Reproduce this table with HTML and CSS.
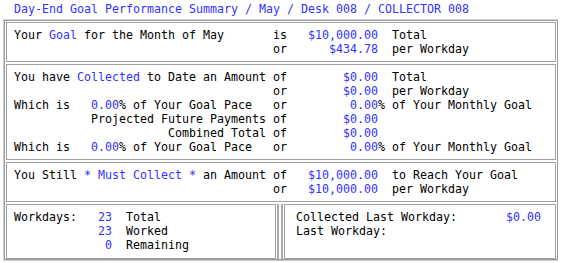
FILE: index.html
```html
<!DOCTYPE html>
<html>
<head>
<meta charset="utf-8">
<link rel="stylesheet" href="styles.css">
</head>
<body>
<div class="title">Day-End Goal Performance Summary / May / Desk 008 / COLLECTOR 008</div>
<div class="frame">
<div class="box">Your <span class="b">Goal</span> for the Month of May       is   <span class="b">$10,000.00</span>  Total
                                     or      <span class="b">$434.78</span>  per Workday</div>
<div class="box">You have <span class="b">Collected</span> to Date an Amount of        <span class="b">$0.00</span>  Total
                                     or        <span class="b">$0.00</span>  per Workday
Which is   <span class="b">0.00</span>% of Your Goal Pace   or         <span class="b">0.00</span>% of Your Monthly Goal
           Projected Future Payments of        <span class="b">$0.00</span>
                      Combined Total of        <span class="b">$0.00</span>
Which is   <span class="b">0.00</span>% of Your Goal Pace   or         <span class="b">0.00</span>% of Your Monthly Goal</div>
<div class="box">You Still <span class="b">* Must Collect *</span> an Amount of   <span class="b">$10,000.00</span>  to Reach Your Goal
                                     or   <span class="b">$10,000.00</span>  per Workday</div>
<div class="bottom">
<div class="box left">Workdays:   <span class="b">23</span>  Total
            <span class="b">23</span>  Worked
             <span class="b">0</span>  Remaining</div>
<div class="split"></div>
<div class="box right">Collected Last Workday:       <span class="b">$0.00</span>
Last Workday:</div>
</div>
</div>
</body>
</html>
```

FILE: styles.css
```css
html, body {
  background: #ffffff;
}
body {
  margin: 2px 3px;
  font-family: "DejaVu Sans Mono", "Liberation Mono", monospace;
  font-size: 11.63px;
  line-height: 14px;
  color: #000000;
}
.b {
  color: #3333ff;
}
.title {
  color: #3333ff;
  white-space: pre;
  padding-left: 11px;
  height: 15px;
  margin-bottom: 2px;
}
.frame {
  box-sizing: border-box;
  width: 556px;
  border: 1px solid #cfcfcf;
  box-shadow: inset 0 0 0 1px #9c9c9c;
  padding: 2px;
  display: flex;
  flex-direction: column;
  gap: 2px;
}
.box {
  border: 1px solid #a0a0a0;
  padding: 5px 7px;
  white-space: pre;
}
.bottom {
  display: flex;
  margin-bottom: -1px;
}
.left {
  box-sizing: border-box;
  width: 270px;
  padding-bottom: 6px;
}
.split {
  box-sizing: border-box;
  width: 6px;
  margin: 0 1px;
  border-left: 2px solid #a8a8a8;
  border-right: 2px solid #a8a8a8;
  margin-bottom: -2px;
}
.right {
  flex: 1;
  padding-left: 11px;
}
```
